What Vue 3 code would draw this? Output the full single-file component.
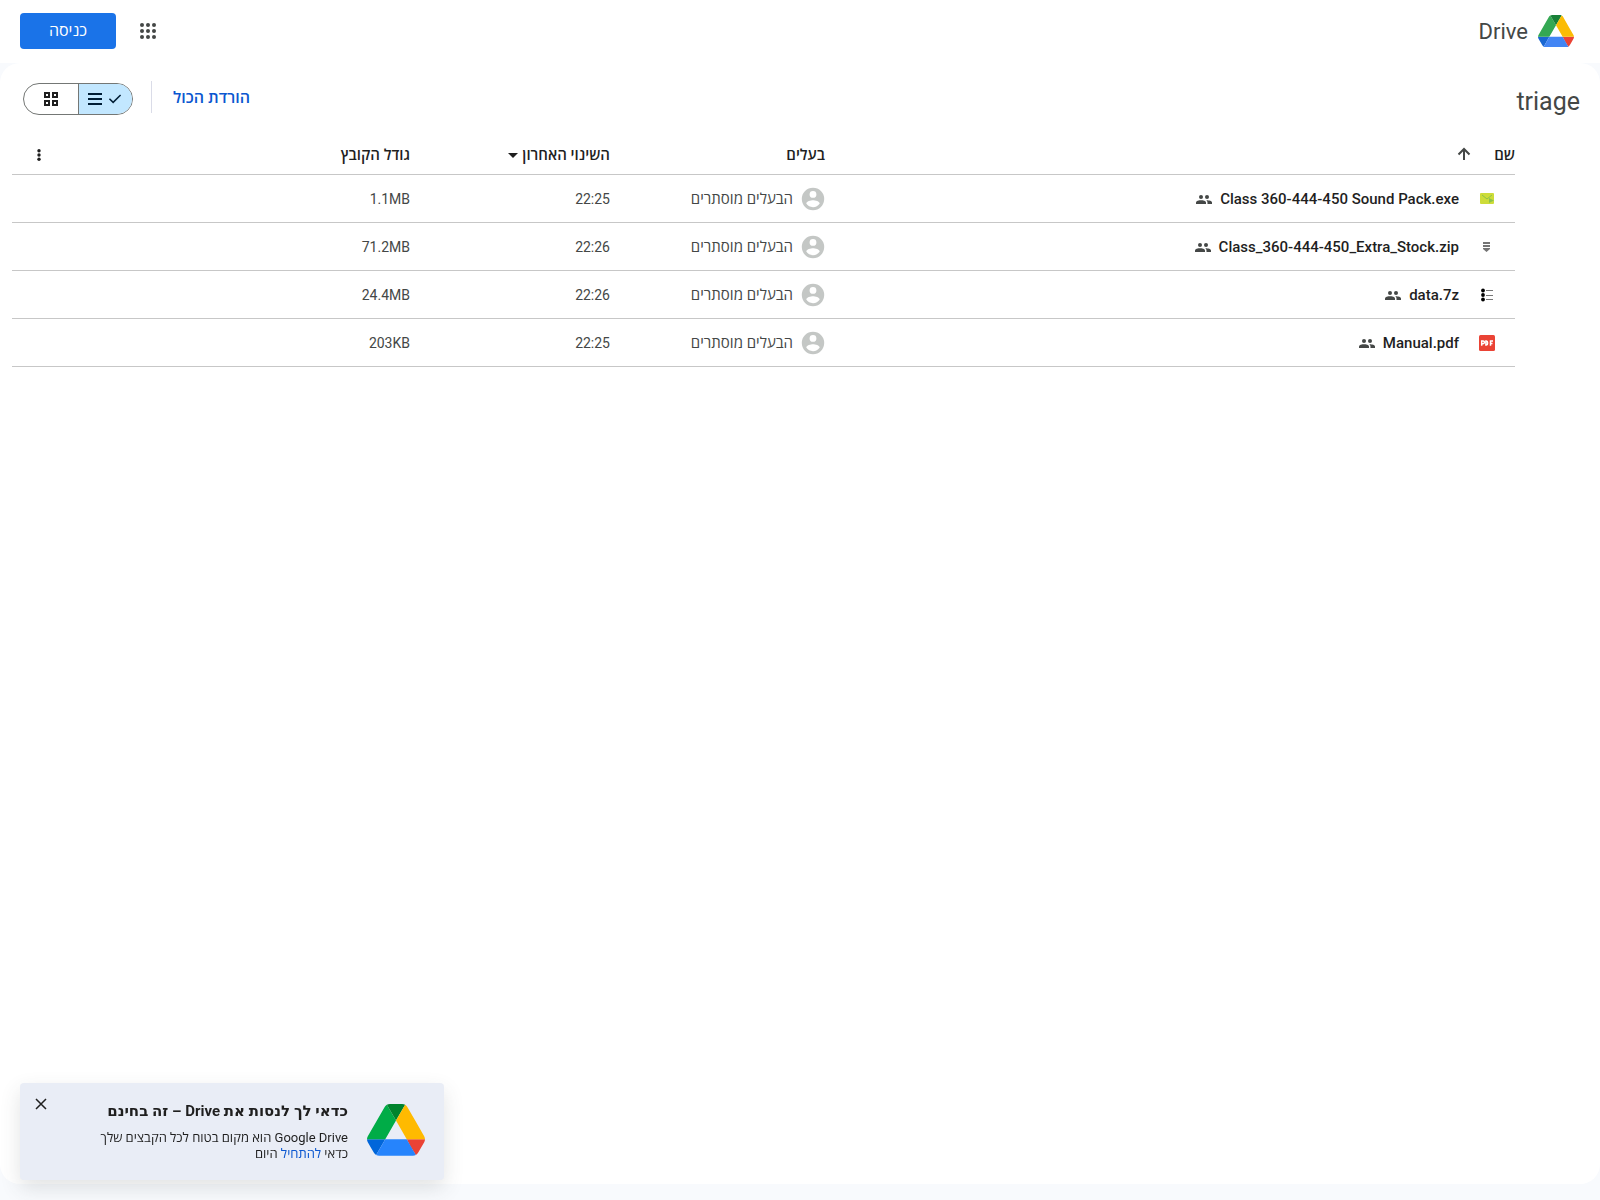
<script setup>
import { ref } from 'vue'

const view = ref('list')
const promoOpen = ref(true)
const files = [
  { name: 'Class 360-444-450 Sound Pack.exe', icon: 'mail', modified: '22:25', size: '1.1MB' },
  { name: 'Class_360-444-450_Extra_Stock.zip', icon: 'zip', modified: '22:26', size: '71.2MB' },
  { name: 'data.7z', icon: 'archive', modified: '22:26', size: '24.4MB' },
  { name: 'Manual.pdf', icon: 'pdf', modified: '22:25', size: '203KB' },
]
</script>

<template>
  <div class="app" dir="rtl" lang="he">
    <header class="topbar">
      <a class="brand" href="#">
        <svg class="brand-logo" viewBox="0 0 87.3 78" aria-hidden="true">
          <path fill="#1967d2" d="m6.6 66.85 3.85 6.65c.8 1.4 1.95 2.5 3.3 3.3l13.75-23.8h-27.5c0 1.55.4 3.1 1.2 4.5z" />
          <path fill="#34a853" d="m43.65 25-13.75-23.8c-1.35.8-2.5 1.9-3.3 3.3l-25.4 44a9.06 9.06 0 0 0 -1.2 4.5h27.5z" />
          <path fill="#ea4335" d="m73.55 76.8c1.35-.8 2.5-1.9 3.3-3.3l1.6-2.75 7.65-13.25c.8-1.4 1.2-2.95 1.2-4.5h-27.5l5.85 11.5z" />
          <path fill="#188038" d="m43.65 25 13.75-23.8c-1.35-.8-2.9-1.2-4.5-1.2h-18.5c-1.6 0-3.15.45-4.5 1.2z" />
          <path fill="#4285f4" d="m59.8 53h-32.3l-13.75 23.8c1.35.8 2.9 1.2 4.5 1.2h50.8c1.6 0 3.15-.45 4.5-1.2z" />
          <path fill="#fbbc04" d="m73.4 26.5-12.7-22c-.8-1.4-1.95-2.5-3.3-3.3l-13.75 23.8 16.15 28h27.45c0-1.55-.4-3.1-1.2-4.5z" />
        </svg>
        <span>Drive</span>
      </a>
      <div class="account">
        <button class="apps" type="button" aria-label="Google apps">
          <svg width="24" height="24" viewBox="0 0 24 24" fill="#444746">
            <template v-for="y in 3" :key="y">
              <circle v-for="x in 3" :key="x" :cx="x * 6" :cy="y * 6" r="2" />
            </template>
          </svg>
        </button>
        <button class="signin" type="button">כניסה</button>
      </div>
    </header>

    <main class="content">
      <div class="surface">
        <div class="toolbar">
          <h1>triage</h1>
          <div class="actions">
            <button class="download" type="button">הורדת הכול</button>
            <div class="toggle">
              <button type="button" :class="{ on: view === 'list' }" aria-label="List" @click="view = 'list'">
                <svg v-if="view === 'list'" width="18" height="18" viewBox="0 0 24 24" fill="currentColor"><path d="M9.55 18 3.85 12.3l1.42-1.43 4.28 4.28 9.18-9.18 1.42 1.43z" /></svg>
                <svg width="16" height="16" viewBox="0 0 16 16" fill="currentColor"><path d="M1 2h14v2H1zM1 7h14v2H1zM1 12h14v2H1z" /></svg>
              </button>
              <button type="button" :class="{ on: view === 'grid' }" aria-label="Grid" @click="view = 'grid'">
                <svg width="16" height="16" viewBox="0 0 16 16" fill="none" stroke="currentColor" stroke-width="2"><path d="M2 2h4v4H2zM10 2h4v4h-4zM2 10h4v4H2zM10 10h4v4h-4z" /></svg>
              </button>
            </div>
          </div>
        </div>

        <table>
          <thead>
            <tr>
              <th class="c-name">
                <div class="sort">
                  <span>שם</span>
                  <svg width="16" height="16" viewBox="0 0 16 16" fill="none" stroke="#444746" stroke-width="2"><path d="M8 13V2M2.500 7.500L8 2l5.500 5.500" /></svg>
                </div>
              </th>
              <th class="c-owner">בעלים</th>
              <th class="c-modified">
                <div class="modified">
                  <span>השינוי האחרון</span>
                  <svg width="10" height="5" viewBox="0 0 10 5" fill="#1f1f1f"><path d="M0 0h10L5 5z" /></svg>
                </div>
              </th>
              <th class="c-size">גודל הקובץ</th>
              <th class="c-more">
                <button type="button" aria-label="More">
                  <svg width="4" height="12" viewBox="0 0 4 12" fill="#1f1f1f"><circle cx="2" cy="1.700" r="1.700" /><circle cx="2" cy="6" r="1.700" /><circle cx="2" cy="10.300" r="1.700" /></svg>
                </button>
              </th>
            </tr>
          </thead>
          <tbody>
            <tr v-for="f in files" :key="f.name">
              <td>
                <div class="file">
                  <svg v-if="f.icon === 'mail'" width="16" height="16" viewBox="0 0 16 16">
                    <rect x="1" y="2" width="14" height="11" rx="1" fill="#cddc39" />
                    <path d="M3 4l5 4 5-4" fill="none" stroke="#8bc34a" />
                    <path d="M10 7l5 2.500-5 2.500z" fill="#8bc34a" />
                  </svg>
                  <svg v-else-if="f.icon === 'zip'" width="16" height="16" viewBox="0 0 16 16" fill="#757575">
                    <path d="M4 3h7v2H4zM4 6h7v2H4zM4 9h7v1l-3.500 3L4 10z" />
                  </svg>
                  <svg v-else-if="f.icon === 'archive'" width="16" height="16" viewBox="0 0 16 16">
                    <circle cx="4" cy="3.500" r="1.900" /><circle cx="4" cy="8" r="1.900" /><circle cx="4" cy="12.500" r="1.900" />
                    <path d="M7 3h7v1H7zM7 8h7v1H7zM7 12h7v1H7z" fill="#777" />
                  </svg>
                  <svg v-else width="16" height="16" viewBox="0 0 16 16">
                    <rect width="16" height="16" rx="1.500" fill="#ea4335" />
                    <path d="M2.700 10.800V6h1.400a.8.800 0 0 1 0 2.700H2.700M6.900 6v4.100h.6c1.500 0 1.500-4.100 0-4.100zM11.500 10.800V6H14M11.500 8.500h2" fill="none" stroke="#fff" stroke-width="1.500" />
                  </svg>
                  <span class="filename" dir="ltr">{{ f.name }}</span>
                  <svg width="16" height="12" viewBox="0 0 16 12" fill="#444746">
                    <circle cx="5" cy="3.900" r="2" /><path d="M0 11V9.600C0 7.800 3 7.200 5 7.200s5 .6 5 2.400V11z" />
                    <circle cx="11" cy="3.900" r="2" /><path d="M11.500 11V9.500c0-.8-.4-1.500-1.200-2.200 2.300-.1 5.700.5 5.700 2.300V11z" />
                  </svg>
                </div>
              </td>
              <td>
                <div class="owner">
                  <svg width="24" height="24" viewBox="0 0 24 24" fill="#c4c7c5"><path fill-rule="evenodd" d="M12 .8a11.200 11.200 0 1 0 0 22.400 11.200 11.200 0 0 0 0-22.400zm0 3.200a3.400 3.400 0 1 1 0 6.800A3.400 3.400 0 0 1 12 4zm0 16.200c-2.800 0-5.300-1.400-6.700-3.600 0-2.200 4.500-3.400 6.700-3.400s6.700 1.200 6.700 3.400a8 8 0 0 1-6.700 3.600z" /></svg>
                  <span>הבעלים מוסתרים</span>
                </div>
              </td>
              <td>{{ f.modified }}</td>
              <td><bdi>{{ f.size }}</bdi></td>
              <td></td>
            </tr>
          </tbody>
        </table>
      </div>
    </main>

    <aside v-if="promoOpen" class="promo">
      <svg class="promo-logo" viewBox="0 0 87.3 78" aria-hidden="true">
        <path fill="#0066da" d="m6.6 66.85 3.85 6.65c.8 1.4 1.95 2.5 3.3 3.3l13.75-23.8h-27.5c0 1.55.4 3.1 1.2 4.5z" />
        <path fill="#00ac47" d="m43.65 25-13.75-23.8c-1.35.8-2.5 1.9-3.3 3.3l-25.4 44a9.06 9.06 0 0 0 -1.2 4.5h27.5z" />
        <path fill="#ea4335" d="m73.55 76.8c1.35-.8 2.5-1.9 3.3-3.3l1.6-2.75 7.65-13.25c.8-1.4 1.2-2.95 1.2-4.5h-27.5l5.85 11.5z" />
        <path fill="#00832d" d="m43.65 25 13.75-23.8c-1.35-.8-2.9-1.2-4.5-1.2h-18.5c-1.6 0-3.15.45-4.5 1.2z" />
        <path fill="#2684fc" d="m59.8 53h-32.3l-13.75 23.8c1.35.8 2.9 1.2 4.5 1.2h50.8c1.6 0 3.15-.45 4.5-1.2z" />
        <path fill="#ffba00" d="m73.4 26.5-12.7-22c-.8-1.4-1.95-2.5-3.3-3.3l-13.75 23.8 16.15 28h27.45c0-1.55-.4-3.1-1.2-4.5z" />
      </svg>
      <div class="promo-text">
        <h2>כדאי לך לנסות את <bdi>Drive</bdi> – זה בחינם</h2>
        <p><bdi>Google Drive</bdi> הוא מקום בטוח לכל הקבצים שלך<br />כדאי <a href="#">להתחיל</a> היום</p>
      </div>
      <button class="close" type="button" aria-label="Close" @click="promoOpen = false">
        <svg width="12" height="12" viewBox="0 0 12 12" fill="none" stroke="#1f1f1f" stroke-width="1.500"><path d="M1 1l10 10M11 1L1 11" /></svg>
      </button>
    </aside>
  </div>
</template>

<style>
body {
  margin: 0;
  background: #f8fafd;
}
</style>

<style scoped>
.app {
  min-height: 100vh;
  display: flex;
  flex-direction: column;
  font-family: Roboto, "Open Sans", sans-serif;
  font-size: 14px;
  color: #1f1f1f;
}
button {
  font: inherit;
  color: inherit;
  border: 0;
  padding: 0;
  background: none;
  cursor: pointer;
}
svg {
  display: block;
  flex: none;
}
.topbar {
  box-sizing: border-box;
  height: 63px;
  padding: 13px 26px 14px 20px;
  display: flex;
  align-items: center;
  justify-content: space-between;
  background: #fff;
}
.brand {
  display: flex;
  align-items: center;
  gap: 10px;
  font-size: 22px;
  line-height: 34px;
  color: #444746;
  text-decoration: none;
}
.brand-logo {
  width: 36px;
}
.brand span {
  padding-top: 2px;
}
.account {
  display: flex;
  align-items: center;
  gap: 20px;
}
.signin {
  width: 96px;
  height: 36px;
  border-radius: 4px;
  background: #1a73e8;
  color: #fff;
  font-size: 16px;
  line-height: 24px;
}
.content {
  flex: 1;
  display: flex;
  padding-bottom: 16px;
}
.surface {
  flex: 1;
  border-radius: 20px;
  background: #fff;
}
.toolbar {
  box-sizing: border-box;
  height: 74px;
  padding: 18px 20px 0 23px;
  display: flex;
  align-items: flex-start;
  justify-content: space-between;
}
h1 {
  margin: 4px 0 0;
  font-size: 25px;
  font-weight: 400;
  line-height: 34px;
  color: #444746;
}
.actions {
  display: flex;
  align-items: flex-start;
}
.download {
  height: 32px;
  margin-left: 18px;
  padding-left: 21px;
  border-left: 1px solid #dadce8;
  color: #0b57d0;
  font-size: 16px;
  font-weight: 600;
  line-height: 34px;
}
.toggle {
  box-sizing: border-box;
  width: 110px;
  height: 32px;
  margin-top: 2px;
  display: flex;
  border: 1px solid #747775;
  border-radius: 16px;
  overflow: hidden;
}
.toggle button {
  flex: 1;
  display: flex;
  align-items: center;
  justify-content: center;
  gap: 3px;
}
.toggle button + button {
  border-right: 1px solid #747775;
}
.toggle .on {
  background: #c2e7ff;
  color: #001d35;
}
table {
  width: calc(100% - 97px);
  margin: 0 85px 0 12px;
  table-layout: fixed;
  border-collapse: separate;
  border-spacing: 0;
}
th,
td {
  box-sizing: border-box;
  height: 48px;
  padding: 0;
  border-bottom: 1px solid #c7c7c7;
  text-align: right;
  color: #444746;
  line-height: 20px;
}
th {
  height: 38px;
  padding-bottom: 1px;
  font-size: 15px;
  font-weight: 600;
  color: #1f1f1f;
}
.c-owner {
  width: 215px;
}
.c-modified {
  width: 200px;
}
.c-size {
  width: 359px;
}
.c-more {
  width: 39px;
}
.sort {
  display: flex;
  align-items: center;
  gap: 22px;
}
.modified {
  display: flex;
  align-items: center;
  gap: 4px;
}
.c-more button {
  width: 24px;
  height: 24px;
  display: flex;
  align-items: center;
  justify-content: center;
}
.file {
  padding-right: 20px;
  display: flex;
  align-items: center;
}
.filename {
  margin: 0 20px 0 8px;
  font-size: 15px;
  font-weight: 500;
  color: #1f1f1f;
}
.owner {
  display: flex;
  align-items: center;
  gap: 8px;
  font-size: 15px;
}
.promo {
  position: fixed;
  left: 20px;
  bottom: 20px;
  box-sizing: border-box;
  width: 424px;
  padding: 15px 19px 18px 15px;
  display: flex;
  align-items: flex-start;
  border-radius: 4px;
  background: #e9edf6;
  box-shadow: 0 8px 20px rgba(60, 64, 67, 0.15);
}
.promo-logo {
  width: 58px;
  margin: 6px 0 0 19px;
}
.promo-text {
  flex: 1;
  padding-top: 3px;
}
h2 {
  margin: 0 0 9px;
  font-family: Roboto, "DejaVu Sans", sans-serif;
  font-size: 15px;
  font-weight: 700;
  line-height: 20px;
}
p {
  margin: 0;
  font-size: 13px;
  line-height: 16px;
}
p a {
  color: #0b57d0;
  text-decoration: none;
}
</style>
